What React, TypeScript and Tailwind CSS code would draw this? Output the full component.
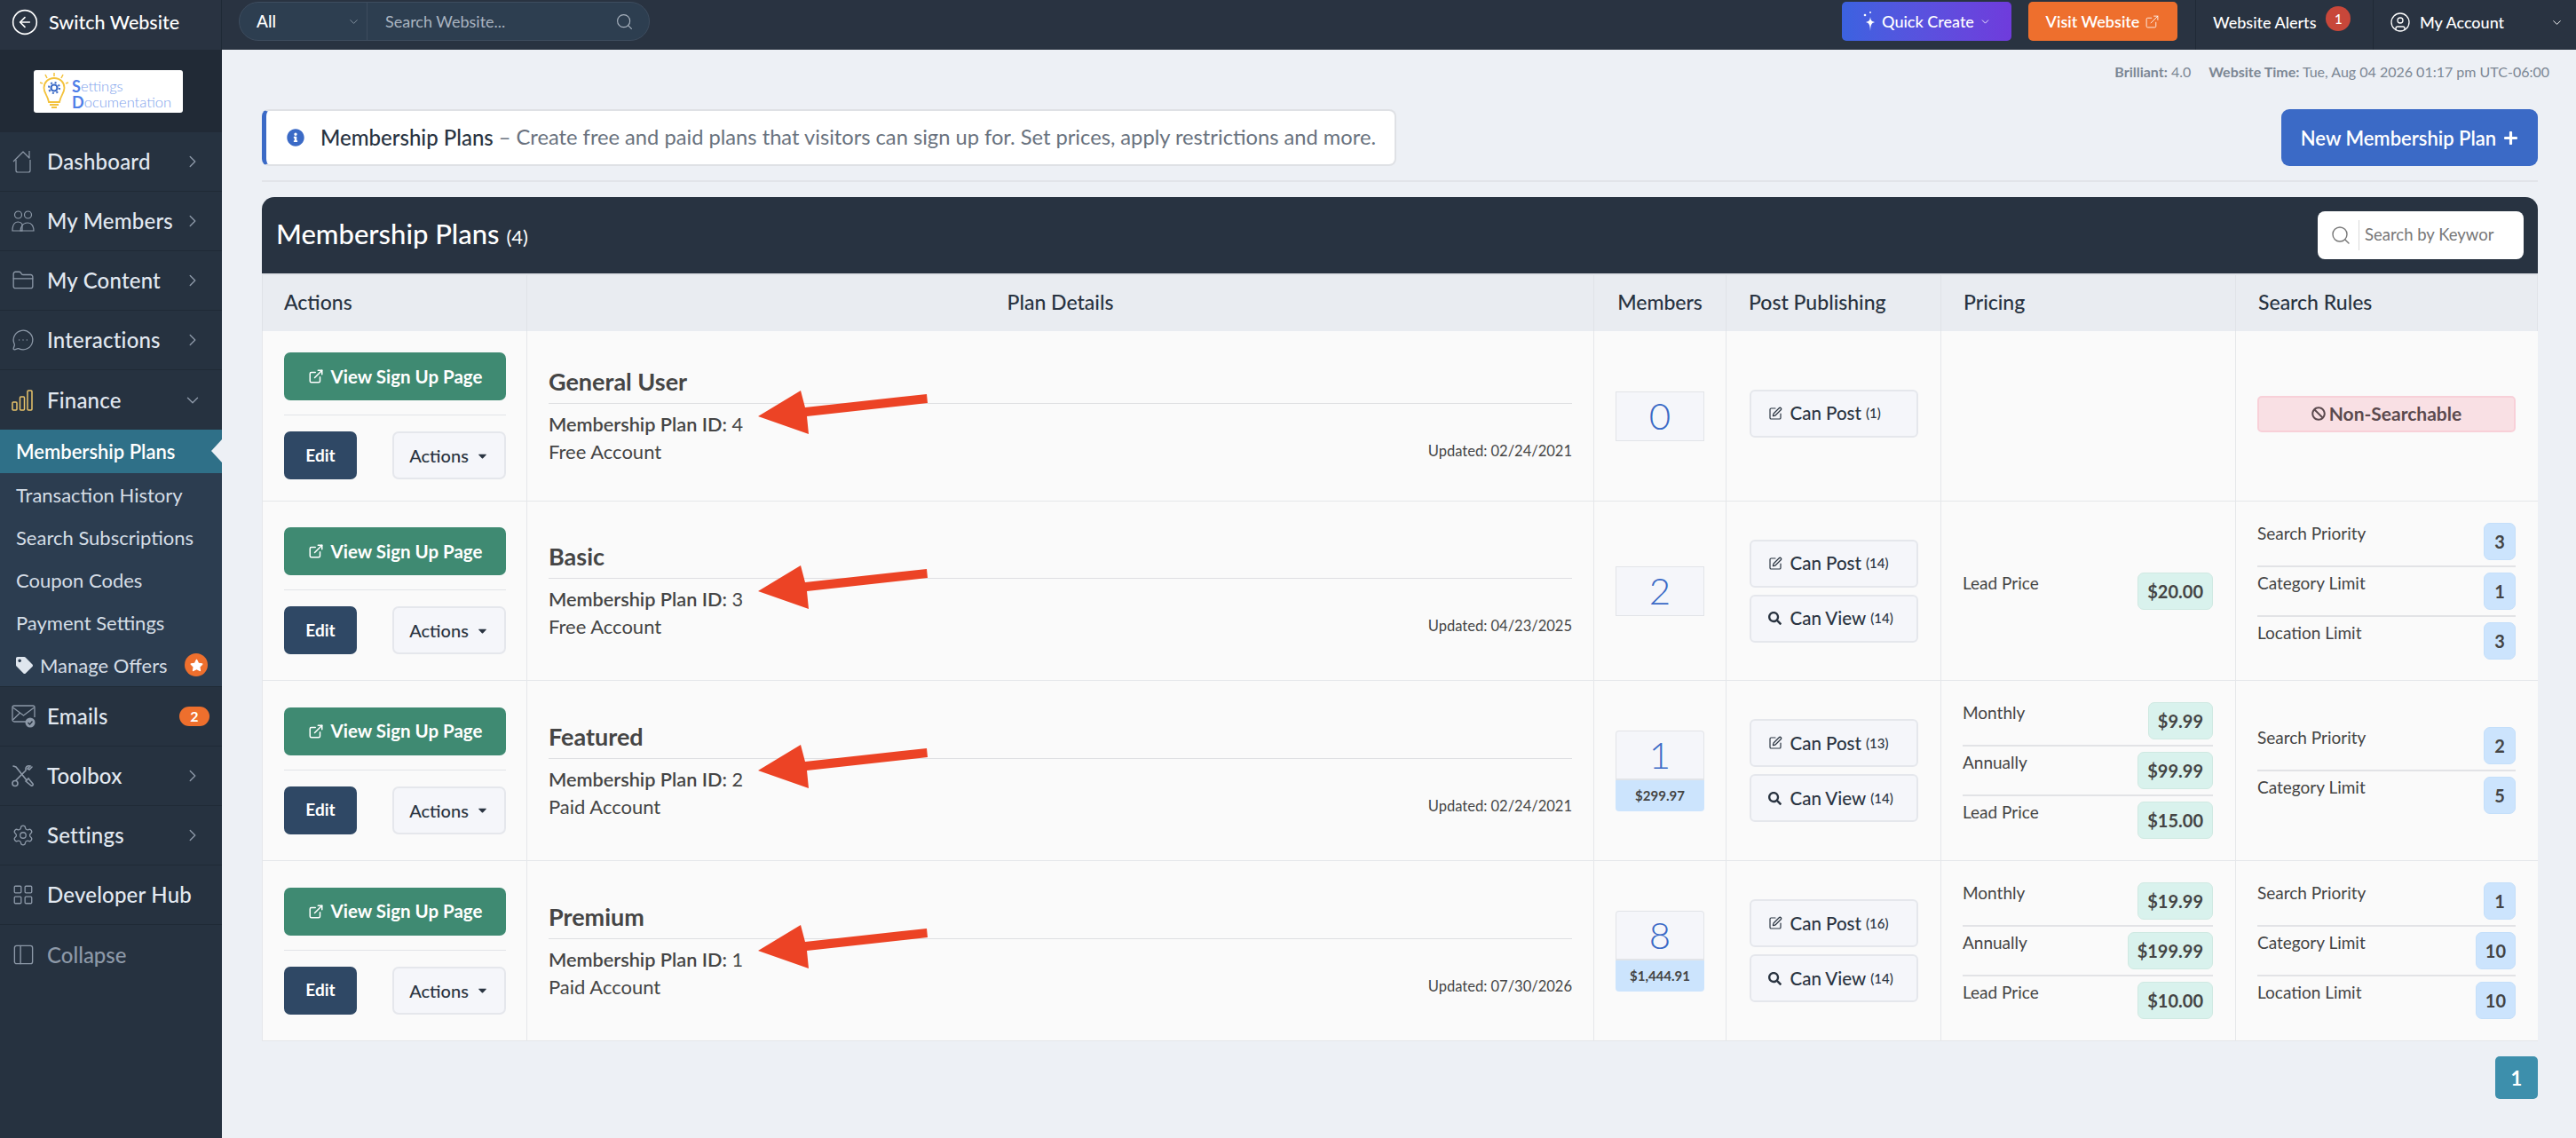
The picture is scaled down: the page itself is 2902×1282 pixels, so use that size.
import type { ReactNode } from "react";
import {
  ChevronDown,
  ChevronRight,
  CircleArrowLeft,
  CircleUser,
  ExternalLink,
  FolderClosed,
  LayoutGrid,
  MessageCircleMore,
  PanelLeft,
  Search,
  Settings,
  SquarePen,
} from "lucide-react";
import { FaBan, FaCaretDown, FaInfoCircle, FaPlus, FaSearch, FaStar, FaTag } from "react-icons/fa";

type Line = { label: string; value: string };

type Plan = {
  name: string;
  id: number;
  type: string;
  updated: string;
  members: string;
  revenue?: string;
  post: number;
  view?: number;
  pricing: Line[];
  rules: Line[];
  rowHeight: string;
};

const plans: Plan[] = [
  {
    name: "General User",
    id: 4,
    type: "Free Account",
    updated: "02/24/2021",
    members: "0",
    post: 1,
    pricing: [],
    rules: [],
    rowHeight: "h-[192px]",
  },
  {
    name: "Basic",
    id: 3,
    type: "Free Account",
    updated: "04/23/2025",
    members: "2",
    post: 14,
    view: 14,
    pricing: [{ label: "Lead Price", value: "$20.00" }],
    rules: [
      { label: "Search Priority", value: "3" },
      { label: "Category Limit", value: "1" },
      { label: "Location Limit", value: "3" },
    ],
    rowHeight: "h-[202px]",
  },
  {
    name: "Featured",
    id: 2,
    type: "Paid Account",
    updated: "02/24/2021",
    members: "1",
    revenue: "$299.97",
    post: 13,
    view: 14,
    pricing: [
      { label: "Monthly", value: "$9.99" },
      { label: "Annually", value: "$99.99" },
      { label: "Lead Price", value: "$15.00" },
    ],
    rules: [
      { label: "Search Priority", value: "2" },
      { label: "Category Limit", value: "5" },
    ],
    rowHeight: "h-[203px]",
  },
  {
    name: "Premium",
    id: 1,
    type: "Paid Account",
    updated: "07/30/2026",
    members: "8",
    revenue: "$1,444.91",
    post: 16,
    view: 14,
    pricing: [
      { label: "Monthly", value: "$19.99" },
      { label: "Annually", value: "$199.99" },
      { label: "Lead Price", value: "$10.00" },
    ],
    rules: [
      { label: "Search Priority", value: "1" },
      { label: "Category Limit", value: "10" },
      { label: "Location Limit", value: "10" },
    ],
    rowHeight: "h-[203px]",
  },
];

const gridCols = "grid grid-cols-[298px_1202px_149px_242px_332px_340px]";

function HomeIcon() {
  return (
    <svg width="26" height="28" viewBox="0 0 26 28" fill="none" stroke="currentColor" strokeWidth="1.2" strokeLinejoin="round">
      <path d="M5 12v12a2 2 0 0 0 2 2h12a2 2 0 0 0 2-2V12" />
      <path d="M2 14L13 3l7 7V2" />
    </svg>
  );
}

function MembersIcon() {
  return (
    <svg width="26" height="26" viewBox="0 0 26 26" fill="none" stroke="currentColor" strokeWidth="1.2">
      <circle cx="7.500" cy="6" r="4" />
      <circle cx="18.500" cy="6" r="4" />
      <path d="M1 24c0-6 2-10 6.500-10 2 0 3.500 1 4.500 2.500V24z" />
      <path d="M10 24c.5-5 3-9 8.500-9 4 0 6.500 4 6.500 9z" />
    </svg>
  );
}

function FinanceIcon() {
  return (
    <svg width="24" height="26" viewBox="0 0 24 26" fill="none" stroke="#e9c46a" strokeWidth="1.5">
      <rect x="1" y="15" width="5" height="9" rx="1" />
      <rect x="9.500" y="9" width="5" height="15" rx="1" />
      <rect x="18" y="2" width="5" height="22" rx="1" />
    </svg>
  );
}

function EmailsIcon() {
  return (
    <svg width="27" height="26" viewBox="0 0 27 26" fill="none" stroke="#8d99a8" strokeWidth="1.3">
      <path d="M16 19H3a2 2 0 0 1-2-2V3a2 2 0 0 1 2-2h21a2 2 0 0 1 2 2v11" />
      <path d="M1.500 3L13.500 12 25.500 3M1.500 17l8-8" />
      <circle cx="21" cy="20" r="5.500" fill="#8d99a8" stroke="none" />
      <path d="M18.500 20l2 2 3-3.500" stroke="#263240" strokeWidth="1.400" />
    </svg>
  );
}

function ToolsIcon() {
  return (
    <svg width="26" height="26" viewBox="0 0 26 26" fill="none" stroke="#8d99a8" strokeWidth="1.6" strokeLinecap="round">
      <path d="M2 2l3 1 12 15" />
      <path d="M16 19l3-3 5 6c.8 1-.2 2.600-1.800 2z" />
      <path d="M23 3l-3 3-2-1 3-3c-3-1-6 1-5 5L5 18" />
      <circle cx="4" cy="21.500" r="3" />
    </svg>
  );
}

function SparkIcon() {
  return (
    <svg width="16" height="24" viewBox="0 0 16 24" fill="white">
      <path d="M9 7c.5 4 1.500 5 5 6-3.500 1-4.500 2-5 10-.5-8-1.500-9-5-10 3.500-1 4.500-2 5-6z" />
      <circle cx="3" cy="5" r="1.300" />
      <circle cx="9" cy="2" r="1" />
    </svg>
  );
}

function LogoBulb() {
  return (
    <svg width="36" height="44" viewBox="0 0 36 44" fill="none">
      <path d="M18 1v4M8 3l2 4M28 3l-2 4M2 12l3 1M34 12l-3 1" stroke="#f3c23c" strokeWidth="1.500" />
      <path
        d="M18 7C11 7 6.500 12 6.500 18c0 6 4.500 9 5.500 16h12c1-7 5.500-10 5.500-16C29.500 12 25 7 18 7z"
        stroke="#f3c23c"
        strokeWidth="1.800"
        fill="#fff"
      />
      <circle cx="18" cy="18" r="3.500" stroke="#3b6ac6" strokeWidth="2.200" />
      <circle cx="18" cy="18" r="6" stroke="#3b6ac6" strokeWidth="2" strokeDasharray="2 2.700" />
      <path d="M13 37h10M15 40h6" stroke="#f3c23c" strokeWidth="1.800" />
    </svg>
  );
}

function NavItem({
  icon,
  label,
  trailing,
  border = true,
}: {
  icon: ReactNode;
  label: string;
  trailing?: ReactNode;
  border?: boolean;
}) {
  return (
    <div
      className={`flex h-[67px] items-center pl-[13px] pr-[14px] text-[#e2e9f1] ${
        border ? "border-b border-[#1f2a36]" : ""
      }`}
    >
      <span className="flex w-[40px] shrink-0 text-[#8d99a8]">{icon}</span>
      <span className="flex-1 text-[24px] font-medium tracking-[0.2px]">{label}</span>
      {trailing}
    </div>
  );
}

function Sidebar() {
  const arrow = <ChevronRight size={22} strokeWidth={1.5} className="mr-[8px] text-[#8d99a8]" />;
  return (
    <aside className="flex w-[250px] shrink-0 flex-col bg-[#263240]">
      <div className="flex h-14 items-center gap-[11px] border-r border-[#1f2a36] bg-[#293341] pb-[6px] pl-[12px]">
        <CircleArrowLeft size={32} strokeWidth={1.2} className="text-white" />
        <span className="text-[21.500px] font-medium text-white">Switch Website</span>
      </div>
      <div className="flex h-[93px] items-center bg-[#212a36] pl-[38px]">
        <div className="flex h-[48px] w-[168px] items-center gap-[2px] rounded-[3px] bg-white pl-[5px]">
          <LogoBulb />
          <div className="pt-[6px] text-[#7ea2ec]">
            <div className="flex h-[18px] items-end text-[16.500px] font-light leading-[18px]">
              <span className="text-[18px] leading-[18px] font-bold text-[#4f7fe8]">S</span>
              ettings
            </div>
            <div className="flex h-[18px] items-end text-[16.500px] font-light leading-[18px]">
              <span className="text-[18px] leading-[18px] font-bold text-[#4f7fe8]">D</span>
              ocumentation
            </div>
          </div>
        </div>
      </div>
      <NavItem icon={<HomeIcon />} label="Dashboard" trailing={arrow} />
      <NavItem icon={<MembersIcon />} label="My Members" trailing={arrow} />
      <NavItem icon={<FolderClosed size={26} strokeWidth={1.2} />} label="My Content" trailing={arrow} />
      <NavItem icon={<MessageCircleMore size={26} strokeWidth={1.2} />} label="Interactions" trailing={arrow} />
      <NavItem
        icon={<FinanceIcon />}
        label="Finance"
        border={false}
        trailing={<ChevronDown size={22} strokeWidth={1.5} className="mr-[8px] text-[#8d99a8]" />}
      />
      <div className="h-[290px] border-b border-[#1f2a36] bg-[#2c3d50] text-[22px] text-[#d5dde6]">
        <div className="relative flex h-[49px] items-center bg-[#2f7088] pl-[18px] font-semibold text-white">
          Membership Plans
          <span className="absolute right-0 top-[11px] border-y-[13px] border-r-[12px] border-y-transparent border-r-[#edf0f5]" />
        </div>
        {["Transaction History", "Search Subscriptions", "Coupon Codes", "Payment Settings"].map((item) => (
          <div key={item} className="flex h-12 items-center pl-[18px]">
            {item}
          </div>
        ))}
        <div className="flex h-12 items-center pl-[18px]">
          <FaTag size={19} className="mr-[8px] text-[#dfe6ee]" />
          <span className="flex-1">Manage Offers</span>
          <span className="mr-[16px] flex h-[26px] w-[26px] items-center justify-center rounded-full bg-[#ee6f2d]">
            <FaStar size={15} className="text-white" />
          </span>
        </div>
      </div>
      <NavItem
        icon={<EmailsIcon />}
        label="Emails"
        trailing={
          <span className="flex h-[22px] w-[34px] items-center justify-center rounded-full bg-[#ee6f2d] text-[16px] font-bold text-white">
            2
          </span>
        }
      />
      <NavItem icon={<ToolsIcon />} label="Toolbox" trailing={arrow} />
      <NavItem icon={<Settings size={26} strokeWidth={1.2} />} label="Settings" trailing={arrow} />
      <NavItem icon={<LayoutGrid size={26} strokeWidth={1.2} />} label="Developer Hub" />
      <div className="flex h-[67px] items-center pl-[13px] text-[#8d99a8]">
        <span className="flex w-[40px] shrink-0">
          <PanelLeft size={27} strokeWidth={1.2} />
        </span>
        <span className="text-[24px] font-medium">Collapse</span>
      </div>
    </aside>
  );
}

function TopBar() {
  return (
    <header className="flex h-14 items-center bg-[#293341] pl-[19px] text-white">
      <div className="mb-[8px] flex h-[44px] w-[463px] items-center rounded-full border border-[#3d4c5e] bg-[#2d3e50]">
        <div className="flex h-full w-[144px] items-center justify-between border-r border-[#3d4c5e] pl-[19px] pr-[7px] text-[19px] font-medium">
          All
          <ChevronDown size={15} strokeWidth={1.4} className="text-[#8d99a8]" />
        </div>
        <span className="flex-1 pl-[20px] text-[18px] text-[#aab4c0]">Search Website...</span>
        <Search size={21} strokeWidth={1.3} className="mr-[17px] text-[#aab4c0]" />
      </div>
      <div className="ml-auto flex h-full items-center">
        <div className="mb-[8px] flex h-[44px] w-[191px] items-center justify-center gap-[6px] rounded-[5px] bg-gradient-to-r from-[#3b62e0] to-[#6f3bdc] text-[18px] font-medium">
          <SparkIcon />
          Quick Create
          <ChevronDown size={13} strokeWidth={1.6} />
        </div>
        <div className="mb-[8px] ml-[19px] flex h-[44px] w-[168px] items-center justify-center gap-[6px] rounded-[5px] bg-[#ee6f2d] text-[18px] font-semibold">
          Visit Website
          <ExternalLink size={17} strokeWidth={1.2} />
        </div>
        <div className="ml-[20px] flex h-full w-[201px] items-center border-x border-[#1f2a36] pb-[6px] pl-[19px] text-[18px] font-medium">
          Website Alerts
          <span className="mb-[8px] ml-[11px] flex h-[28px] w-[28px] items-center justify-center rounded-full bg-[#c8473a] text-[15px]">
            1
          </span>
        </div>
        <div className="flex h-full w-[228px] items-center pb-[6px] pl-[18px] text-[18px] font-medium">
          <CircleUser size={24} strokeWidth={1.3} className="mr-[10px]" />
          <span className="flex-1">My Account</span>
          <ChevronDown size={15} strokeWidth={1.5} className="mr-[14px]" />
        </div>
      </div>
    </header>
  );
}

function ActionsCell() {
  return (
    <div className="flex flex-col justify-center border-r border-[#e5e7ea] px-[24px]">
      <div className="flex h-[54px] w-[250px] items-center justify-center gap-[8px] rounded-[7px] bg-[#3f8a72] text-[20.500px] font-bold text-white">
        <ExternalLink size={18} strokeWidth={2} />
        View Sign Up Page
      </div>
      <div className="mb-[18px] mt-[16px] w-[250px] border-t border-[#e2e4e8]" />
      <div className="flex w-[250px] justify-between">
        <div className="flex h-[54px] w-[82px] items-center justify-center rounded-[7px] bg-[#2f4865] text-[19px] font-bold text-white">
          Edit
        </div>
        <div className="flex h-[54px] w-[128px] items-center justify-center gap-[8px] rounded-[7px] border-2 border-[#e5e7ec] bg-[#f5f6fa] text-[20px] font-medium text-[#2a3441]">
          Actions
          <FaCaretDown size={15} />
        </div>
      </div>
    </div>
  );
}

function DetailsCell({ plan }: { plan: Plan }) {
  return (
    <div className="relative flex flex-col justify-center border-r border-[#e5e7ea] px-[24px] text-[#454545]">
      <div className="border-b border-[#dedfe2] pb-[7px] text-[27px] font-bold leading-[34px]">{plan.name}</div>
      <div className="mt-[8px] text-[21.700px] font-semibold leading-[30px]">
        Membership Plan ID: <span className="font-normal">{plan.id}</span>
      </div>
      <div className="flex items-center justify-between text-[22px] leading-[31px]">
        {plan.type}
        <span className="text-[16.500px]">Updated: {plan.updated}</span>
      </div>
      <svg
        className="absolute left-[260px] top-1/2 -mt-[30px]"
        width="194"
        height="54"
        viewBox="0 0 194 54"
        fill="#ec4325"
      >
        <path d="M0 30 L48 1 L53 20 L190 5 L191 15 L55 30 L57 50 Z" />
      </svg>
    </div>
  );
}

function MembersCell({ plan }: { plan: Plan }) {
  return (
    <div className="flex flex-col items-center justify-center border-r border-[#e5e7ea]">
      <div className="w-[100px]">
        <div
          className={`flex h-[56px] items-center justify-center border border-[#e2e4e8] bg-[#f5f6fa] text-[42px] font-light text-[#3b6ac6] ${
            plan.revenue ? "rounded-t-[4px] border-b-2" : ""
          }`}
        >
          {plan.members}
        </div>
        {plan.revenue ? (
          <div className="flex h-[35px] items-center justify-center rounded-b-[4px] bg-[#cce4fd] text-[15px] font-bold text-[#444]">
            {plan.revenue}
          </div>
        ) : null}
      </div>
    </div>
  );
}

function PostButton({ icon, label, count }: { icon: ReactNode; label: string; count: number }) {
  return (
    <div className="flex h-[54px] w-[190px] items-center rounded-[6px] border-2 border-[#e5e7ec] bg-[#f5f6fa] pl-[19px] text-[20.500px] font-medium text-[#2a3441]">
      <span className="mr-[8px] flex w-[17px]">{icon}</span>
      {label}
      <span className="ml-[5px] text-[15px]">({count})</span>
    </div>
  );
}

function PostCell({ plan }: { plan: Plan }) {
  return (
    <div
      className={`flex flex-col items-center justify-center gap-[8px] border-r border-[#e5e7ea] ${
        plan.view ? "" : "pb-[6px]"
      }`}
    >
      <PostButton icon={<SquarePen size={16} strokeWidth={1.8} />} label="Can Post" count={plan.post} />
      {plan.view ? <PostButton icon={<FaSearch size={15} />} label="Can View" count={plan.view} /> : null}
    </div>
  );
}

function ValueRows({ lines, badge }: { lines: Line[]; badge: string }) {
  return (
    <div className="flex flex-col">
      {lines.map((line, index) => (
        <div
          key={line.label}
          className={`flex justify-between ${
            index < lines.length - 1 ? "mb-[6px] border-b-2 border-[#e2e3e6] pb-[6px]" : ""
          }`}
        >
          <span className="text-[19px] leading-[24px] text-[#444]">{line.label}</span>
          <span
            className={`flex h-[42px] min-w-[36px] items-center justify-center rounded-[7px] border px-[10px] text-[20px] font-bold text-[#444] ${badge}`}
          >
            {line.value}
          </span>
        </div>
      ))}
    </div>
  );
}

function PlanRow({ plan }: { plan: Plan }) {
  return (
    <div className={`${gridCols} ${plan.rowHeight} border-b border-l border-[#e5e7ea] bg-[#fafafa]`}>
      <ActionsCell />
      <DetailsCell plan={plan} />
      <MembersCell plan={plan} />
      <PostCell plan={plan} />
      <div className="flex flex-col justify-center border-r border-[#e5e7ea] pl-[24px] pr-[25px]">
        <ValueRows lines={plan.pricing} badge="border-[#cfe9e2] bg-[#d9f2ed]" />
      </div>
      <div className="flex flex-col justify-center pl-[24px] pr-[25px]">
        {plan.rules.length > 0 ? (
          <ValueRows lines={plan.rules} badge="border-[#c4dffa] bg-[#cce4fd]" />
        ) : (
          <div className="mb-[5px] flex h-[41px] items-center justify-center gap-[4px] rounded-[5px] border-2 border-[#f8d0d8] bg-[#f9e0e4] text-[21px] font-bold text-[#5b4a4e]">
            <FaBan size={16} />
            Non-Searchable
          </div>
        )}
      </div>
    </div>
  );
}

export default function App() {
  const headCell = "flex items-center border-r border-[#e0e3e8] pb-[2px] text-[23px] font-medium text-[#283341]";
  return (
    <div className="flex min-h-screen bg-[#edf0f5] font-['Lato',sans-serif]">
      <Sidebar />
      <div className="flex min-w-0 flex-1 flex-col">
        <TopBar />
        <main className="pl-[45px] pr-[43px]">
          <div className="-mr-[13px] flex h-[52px] items-center justify-end gap-[20px] pb-[2px] text-[16px] text-[#7c8794]">
            <span>
              <b>Brilliant:</b> 4.0
            </span>
            <span>
              <b>Website Time:</b> Tue, Aug 04 2026 01:17 pm UTC-06:00
            </span>
          </div>
          <div className="mt-[15px] flex items-start justify-between">
            <div className="flex h-[64px] w-[1278px] items-center rounded-[8px] border-2 border-l-[5px] border-[#dfe1e5] border-l-[#3b6ac6] bg-white pl-[23px] text-[24px]">
              <FaInfoCircle size={20} className="mr-[18px] text-[#3b6ac6]" />
              <span className="font-medium text-[#283341]">Membership Plans</span>
              <span className="ml-[6px] text-[23.700px] text-[#69727e]">
                – Create free and paid plans that visitors can sign up for. Set prices, apply restrictions and more.
              </span>
            </div>
            <div className="flex h-[64px] w-[289px] items-center justify-center gap-[8px] rounded-[9px] bg-[#3b6ac6] text-[22px] font-semibold text-white">
              New Membership Plan
              <FaPlus size={17} />
            </div>
          </div>
          <div className="mt-[16px] border-t-2 border-[#e2e4e9]" />
          <section className="mt-[17px]">
            <div className="flex h-[86px] items-center justify-between rounded-t-[14px] bg-[#283341] px-[16px] text-white">
              <h1 className="pb-[4px] text-[31px] font-medium">
                Membership Plans <span className="text-[22px] font-normal">(4)</span>
              </h1>
              <div className="flex h-[54px] w-[232px] items-center rounded-[8px] bg-white pl-[14px] text-[18.500px] text-[#777]">
                <Search size={24} strokeWidth={1.4} className="mr-[8px] text-[#777]" />
                <span className="border-l border-[#d9d9d9] py-[3px] pl-[6px]">Search by Keywor</span>
              </div>
            </div>
            <div className={`${gridCols} h-[65px] border-t-2 border-l border-[#dfe2e7] bg-[#e9ecf1]`}>
              <div className={`${headCell} pl-[24px]`}>Actions</div>
              <div className={`${headCell} justify-center`}>Plan Details</div>
              <div className={`${headCell} justify-center`}>Members</div>
              <div className={`${headCell} pl-[25px]`}>Post Publishing</div>
              <div className={`${headCell} pl-[25px]`}>Pricing</div>
              <div className={`${headCell} pl-[25px]`}>Search Rules</div>
            </div>
            {plans.map((plan) => (
              <PlanRow key={plan.id} plan={plan} />
            ))}
          </section>
          <div className="mt-[17px] flex justify-end">
            <div className="flex h-[48px] w-[48px] items-center justify-center rounded-[5px] bg-[#3d8fac] text-[22px] font-bold text-white">
              1
            </div>
          </div>
        </main>
      </div>
    </div>
  );
}
